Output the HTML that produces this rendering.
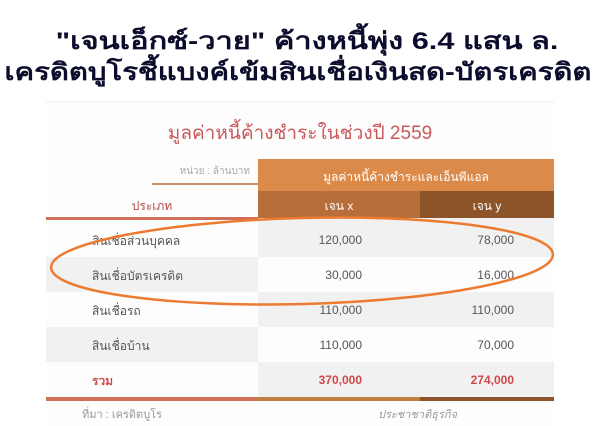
<!DOCTYPE html>
<html><head><meta charset="utf-8"><style>
*{margin:0;padding:0;box-sizing:border-box}
body{width:596px;height:426px;background:#fff;position:relative;overflow:hidden;font-family:"Liberation Sans","Noto Sans CJK SC",sans-serif}
.t{position:absolute;left:0;width:596px;text-align:center;font-weight:bold;color:#0c0c2c;font-size:24px;white-space:nowrap}
.a{position:absolute}
.c{position:absolute;font-size:12px;color:#555;white-space:nowrap}
</style></head><body>
<div class="t" style="top:21px;left:9px;transform:scaleX(1.28)">"เจนเอ็กซ์-วาย" ค้างหนี้พุ่ง 6.4 แสน ล.</div>
<div class="t" style="top:52px;transform:scaleX(1.22)">เครดิตบูโรชี้แบงค์เข้มสินเชื่อเงินสด-บัตรเครดิต</div>

<div class="a" style="left:46px;top:101px;width:508px;height:325px;background:#fdfdfd;border-top:1px solid #eee"></div>
<div class="c" style="left:46px;width:508px;top:118px;text-align:center;font-size:19px;color:#c8585a">มูลค่าหนี้ค้างชำระในช่วงปี 2559</div>
<div class="c" style="left:150px;top:164px;width:100px;text-align:right;font-size:10px;color:#aaa">หน่วย : ล้านบาท</div>
<div class="a" style="left:152px;top:183px;width:106px;height:2px;background:#c8906a"></div>
<div class="a" style="left:258px;top:159px;width:296px;height:32px;background:#dc8a4a"></div>
<div class="c" style="left:258px;top:168px;width:296px;text-align:center;color:#fff">มูลค่าหนี้ค้างชำระและเอ็นพีแอล</div>
<div class="a" style="left:258px;top:191px;width:162px;height:27px;background:#b86e3a"></div>
<div class="a" style="left:420px;top:191px;width:134px;height:27px;background:#8c5428"></div>
<div class="c" style="left:258px;top:197px;width:162px;text-align:center;color:#fff">เจน x</div>
<div class="c" style="left:420px;top:197px;width:134px;text-align:center;color:#fff">เจน y</div>
<div class="c" style="left:46px;top:197px;width:212px;text-align:center;color:#b24a4a">ประเภท</div>
<div class="a" style="left:46px;top:217px;width:212px;height:3px;background:#d0705a"></div>

<div class="a" style="left:46px;top:257px;width:212px;height:35px;background:#f1f1f1"></div>
<div class="a" style="left:46px;top:327px;width:212px;height:35px;background:#f1f1f1"></div>
<div class="a" style="left:258px;top:218px;width:296px;height:39px;background:#f1f1f1"></div>
<div class="a" style="left:258px;top:292px;width:296px;height:35px;background:#f1f1f1"></div>
<div class="a" style="left:258px;top:362px;width:296px;height:35px;background:#f1f1f1"></div>

<div class="c" style="left:92px;top:232px">สินเชื่อส่วนบุคคล</div>
<div class="c" style="left:92px;top:267px">สินเชื่อบัตรเครดิต</div>
<div class="c" style="left:92px;top:302px">สินเชื่อรถ</div>
<div class="c" style="left:92px;top:337px">สินเชื่อบ้าน</div>
<div class="c" style="left:92px;top:372px;color:#d05050;font-weight:bold">รวม</div>

<div class="c" style="left:250px;width:112px;text-align:right;top:233px">120,000</div>
<div class="c" style="left:250px;width:112px;text-align:right;top:268px">30,000</div>
<div class="c" style="left:250px;width:112px;text-align:right;top:303px">110,000</div>
<div class="c" style="left:250px;width:112px;text-align:right;top:338px">110,000</div>
<div class="c" style="left:250px;width:112px;text-align:right;top:373px;color:#d04848;font-weight:bold">370,000</div>
<div class="c" style="left:410px;width:104px;text-align:right;top:233px">78,000</div>
<div class="c" style="left:410px;width:104px;text-align:right;top:268px">16,000</div>
<div class="c" style="left:410px;width:104px;text-align:right;top:303px">110,000</div>
<div class="c" style="left:410px;width:104px;text-align:right;top:338px">70,000</div>
<div class="c" style="left:410px;width:104px;text-align:right;top:373px;color:#d04848;font-weight:bold">274,000</div>

<div class="a" style="left:46px;top:397px;width:212px;height:4px;background:#d0705a"></div>
<div class="a" style="left:258px;top:397px;width:162px;height:4px;background:#c08040"></div>
<div class="a" style="left:420px;top:397px;width:134px;height:4px;background:#8c5428"></div>
<div class="c" style="left:82px;top:405px;font-size:11px;color:#999">ที่มา : เครดิตบูโร</div>
<div class="c" style="left:378px;top:405px;font-size:11px;color:#999;font-style:italic">ประชาชาติธุรกิจ</div>

<svg class="a" style="left:0;top:0" width="596" height="426"><ellipse cx="302" cy="261" rx="251" ry="43" fill="none" stroke="#ec7a30" stroke-width="2.5" transform="rotate(-1.5 302 261)"/></svg>
</body></html>
